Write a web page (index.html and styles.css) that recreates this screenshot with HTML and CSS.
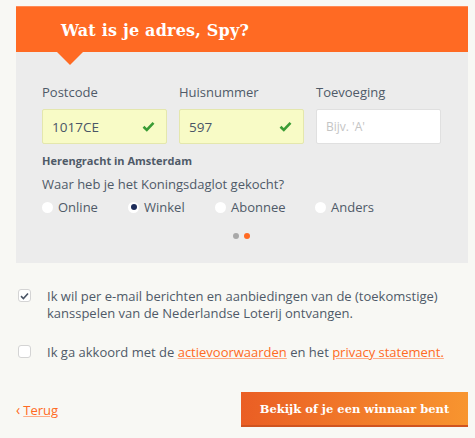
FILE: index.html
```html
<!DOCTYPE html>
<html lang="nl">
  <head>
    <meta charset="UTF-8" />
    <meta name="viewport" content="width=device-width, initial-scale=1.0" />
    <title>Wat is je adres?</title>
    <link rel="stylesheet" href="styles.css">
  </head>
  <body>
    <div class="card">
      <div class="card-header">
        <h1>Wat is je adres, Spy?</h1>
      </div>

      <div class="card-body">
        <div class="fields">
          <div class="field">
            <label>Postcode</label>
            <div class="input valid">
              <span>1017CE</span>
              <svg class="check" width="13" height="11" viewBox="0 0 13 11">
                <path d="M1.5 5.8 L4.8 9 L11.5 1.8" fill="none" stroke="#3a9c35" stroke-width="2.6" />
              </svg>
            </div>
          </div>
          <div class="field">
            <label>Huisnummer</label>
            <div class="input valid">
              <span>597</span>
              <svg class="check" width="13" height="11" viewBox="0 0 13 11">
                <path d="M1.5 5.8 L4.8 9 L11.5 1.8" fill="none" stroke="#3a9c35" stroke-width="2.6" />
              </svg>
            </div>
          </div>
          <div class="field">
            <label>Toevoeging</label>
            <div class="input">
              <span class="placeholder">Bijv. 'A'</span>
            </div>
          </div>
        </div>

        <p class="address">Herengracht in Amsterdam</p>
        <p class="question">Waar heb je het Koningsdaglot gekocht?</p>

        <div class="radios">
          <label class="radio radio-online"><span class="dot"></span>Online</label>
          <label class="radio radio-winkel"><span class="dot checked"></span>Winkel</label>
          <label class="radio radio-abonnee"><span class="dot"></span>Abonnee</label>
          <label class="radio"><span class="dot"></span>Anders</label>
        </div>

        <div class="steps">
          <span class="step"></span>
          <span class="step active"></span>
        </div>
      </div>
    </div>

    <div class="consent">
      <div class="consent-row">
        <span class="box">
          <svg width="9" height="8" viewBox="0 0 9 8">
            <path d="M1 4.2 L3.4 6.5 L8 1.5" fill="none" stroke="#4a5566" stroke-width="1.6" />
          </svg>
        </span>
        <p>Ik wil per e-mail berichten en aanbiedingen van de (toekomstige) kansspelen van de Nederlandse Loterij ontvangen.</p>
      </div>
      <div class="consent-row second">
        <span class="box"></span>
        <p>Ik ga akkoord met de <a href="#">actievoorwaarden</a> en het <a href="#">privacy statement.</a></p>
      </div>
    </div>

    <div class="footer">
      <a href="#" class="back"><span class="chev">‹</span><span class="back-text">Terug</span></a>
      <button class="submit-btn">Bekijk of je een winnaar bent</button>
    </div>
  </body>
</html>
```

FILE: styles.css
```css
* {
  margin: 0;
  padding: 0;
  box-sizing: border-box;
}

body {
  font-family: "Open Sans", Arial, sans-serif;
  background: #f8f8f4;
  color: #4f5a68;
  padding: 6px 7px 0 16px;
}

.card {
  width: 452px;
  background: #ececec;
}

.card-header {
  position: relative;
  height: 46px;
  background: #ff6a23;
  border-top: 1px solid #ff8a55;
  padding-left: 45px;
  display: flex;
  align-items: center;
}

.card-header::after {
  content: "";
  position: absolute;
  left: 41px;
  bottom: -13px;
  border-left: 13px solid transparent;
  border-right: 13px solid transparent;
  border-top: 13px solid #ff6a23;
}

.card-header h1 {
  font-family: "DejaVu Serif", serif;
  font-weight: bold;
  font-size: 16px;
  color: white;
  letter-spacing: 0.2px;
  margin-top: 1px;
}

.card-body {
  padding: 31px 27px 0 26px;
  height: 211px;
}

.fields {
  display: grid;
  grid-template-columns: 125px 125px 125px;
  gap: 12px;
}

.field label {
  display: block;
  font-size: 13px;
  line-height: 18px;
  margin-bottom: 8px;
}

.input {
  height: 35px;
  background: white;
  border: 1px solid #e0e0e0;
  border-radius: 2px;
  display: flex;
  align-items: center;
  justify-content: space-between;
  padding: 0 11px 0 9px;
  font-size: 13.5px;
  color: #4a5566;
}

.input.valid {
  background: #f8fbc6;
  border-color: #e4e7ad;
}

.placeholder {
  color: #c4c4c4;
  font-size: 12px;
}

.address {
  font-size: 11px;
  font-weight: bold;
  margin-top: 9px;
  line-height: 15px;
}

.question {
  font-size: 13px;
  margin-top: 7px;
  line-height: 18px;
}

.radios {
  display: flex;
  margin-top: 5px;
  font-size: 13px;
  line-height: 18px;
}

.radio {
  display: flex;
  align-items: center;
}

.radio-online {
  width: 86px;
}

.radio-winkel {
  width: 87px;
}

.radio-abonnee {
  width: 100px;
}

.dot {
  width: 11px;
  height: 11px;
  border-radius: 50%;
  background: white;
  margin-right: 5px;
  position: relative;
}

.dot.checked::after {
  content: "";
  position: absolute;
  left: 2.5px;
  top: 2.5px;
  width: 6px;
  height: 6px;
  border-radius: 50%;
  background: #1d2c5a;
}

.steps {
  display: flex;
  justify-content: center;
  gap: 5px;
  margin-top: 17px;
}

.step {
  width: 6px;
  height: 6px;
  border-radius: 50%;
  background: #a8a8a8;
}

.step.active {
  background: #ff6a23;
}

.consent {
  padding-top: 25px;
  padding-left: 2px;
}

.consent-row {
  display: flex;
  align-items: flex-start;
}

.consent-row p {
  font-size: 13px;
  line-height: 17px;
  width: 400px;
}

.consent-row.second {
  margin-top: 22px;
}

.box {
  width: 13px;
  height: 13px;
  flex-shrink: 0;
  background: white;
  border: 1px solid #d4d4d4;
  border-radius: 3px;
  margin: 1px 16px 0 0;
  display: flex;
  align-items: center;
  justify-content: center;
}

.consent a {
  color: #ff6a23;
  text-decoration: underline;
  text-decoration-color: #ffab85;
}

.footer {
  display: flex;
  justify-content: space-between;
  align-items: center;
  margin-top: 31px;
}

.back {
  color: #ff6a23;
  font-size: 13px;
  text-decoration: none;
  display: flex;
  align-items: center;
  gap: 3px;
}

.back-text {
  text-decoration: underline;
  text-decoration-color: #ffab85;
}

.chev {
  font-size: 14px;
}

.submit-btn {
  width: 227px;
  height: 35px;
  border: none;
  border-bottom: 2px solid #cf5420;
  background: linear-gradient(to right, #ea5e24, #f8952f);
  color: white;
  font-family: "DejaVu Serif", serif;
  font-weight: bold;
  font-size: 11.5px;
}
```
